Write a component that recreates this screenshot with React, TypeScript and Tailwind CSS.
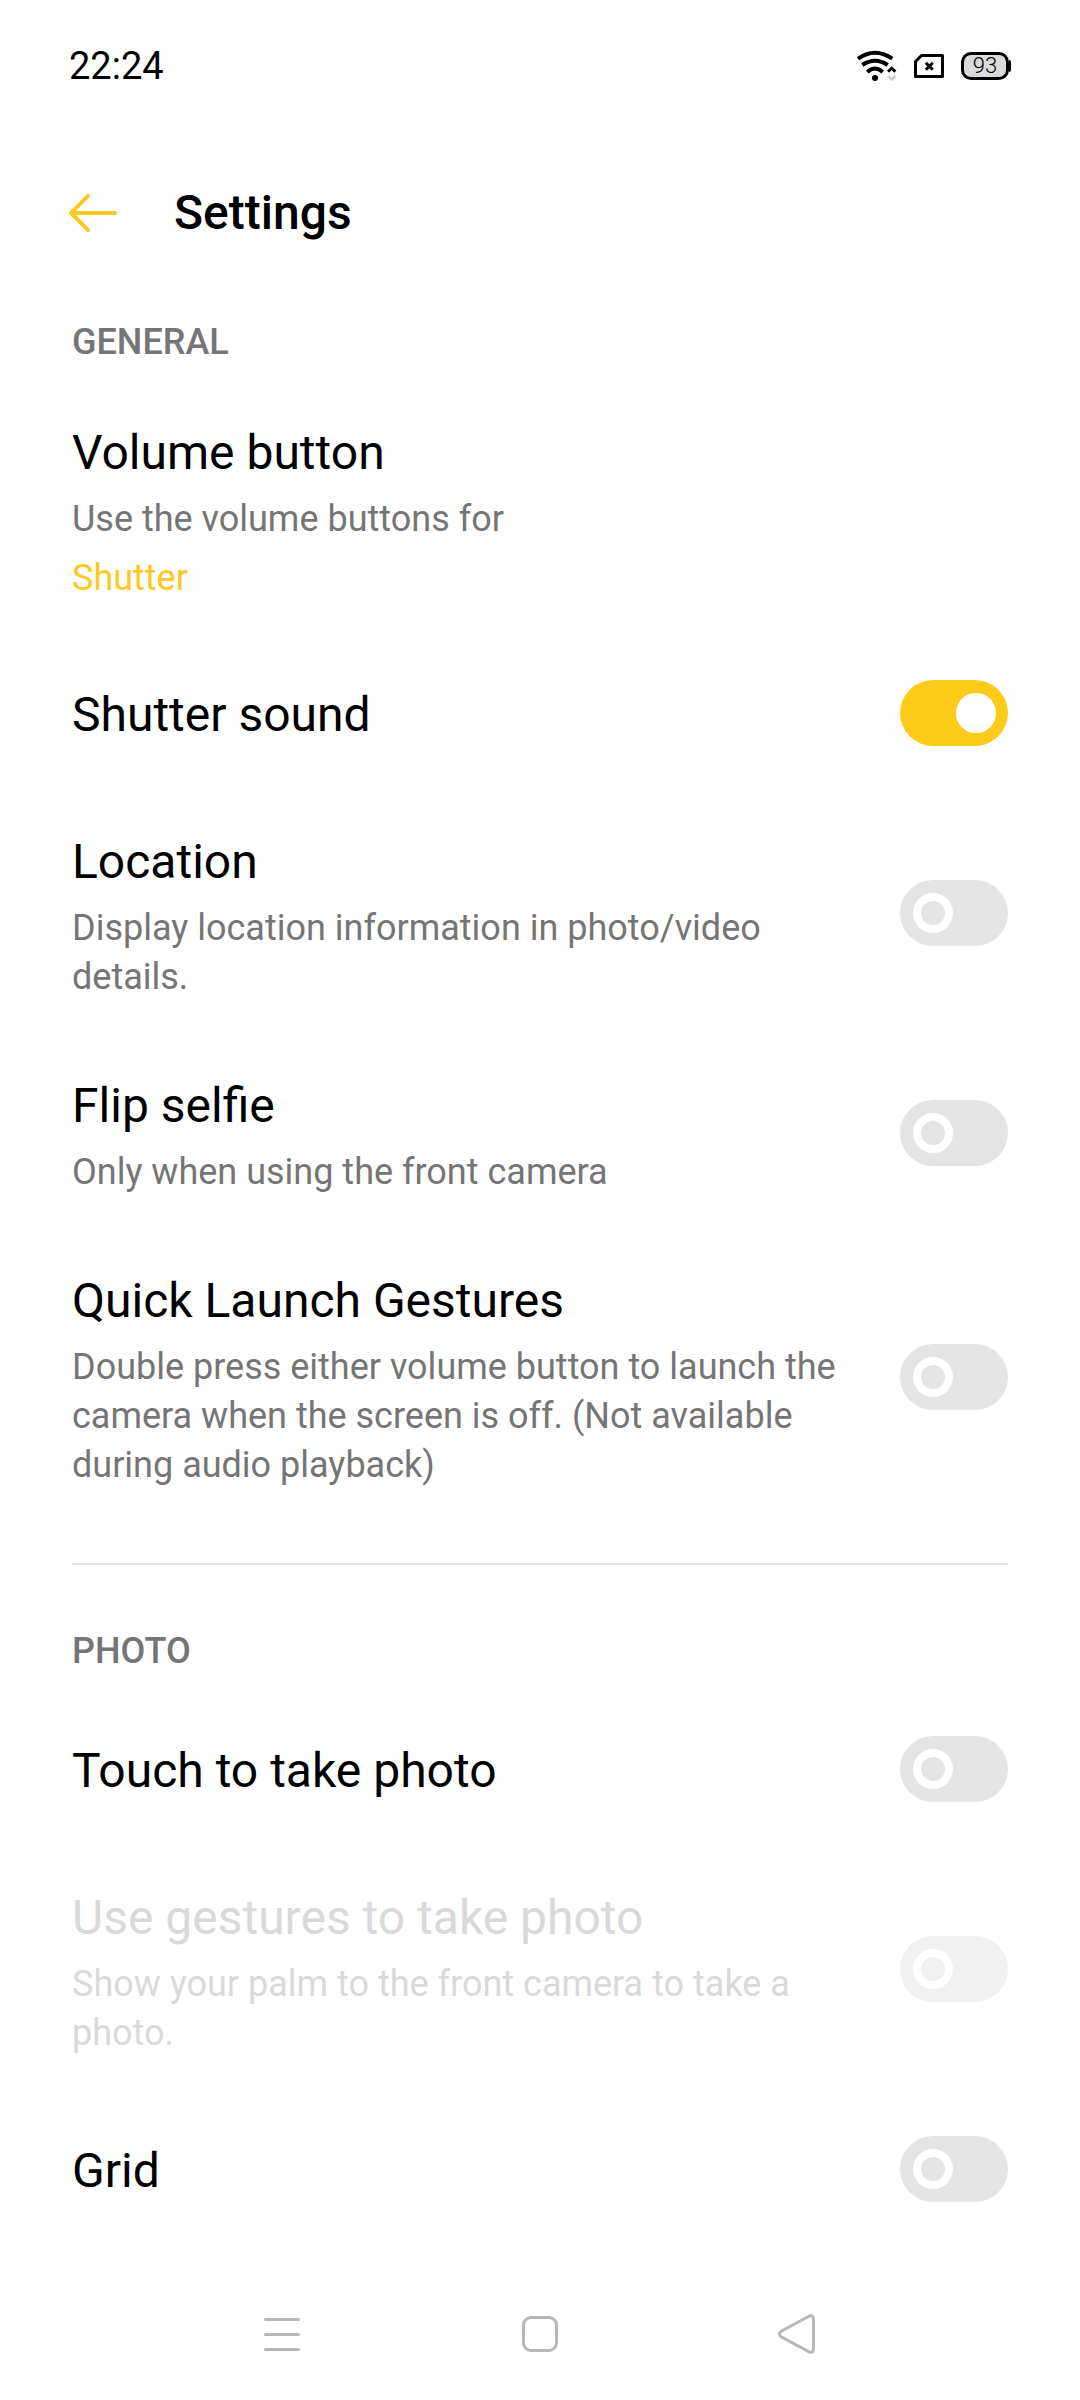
import { useState } from "react";

interface SettingItem {
  id: string;
  title: string;
  description?: string;
  value?: string;
  toggle?: boolean;
  checked?: boolean;
  disabled?: boolean;
}

const general: SettingItem[] = [
  { id: "volume", title: "Volume button", description: "Use the volume buttons for", value: "Shutter" },
  { id: "sound", title: "Shutter sound", toggle: true, checked: true },
  { id: "location", title: "Location", description: "Display location information in photo/video details.", toggle: true },
  { id: "flip", title: "Flip selfie", description: "Only when using the front camera", toggle: true },
  {
    id: "quick",
    title: "Quick Launch Gestures",
    description: "Double press either volume button to launch the camera when the screen is off. (Not available during audio playback)",
    toggle: true,
  },
];

const photo: SettingItem[] = [
  { id: "touch", title: "Touch to take photo", toggle: true },
  {
    id: "gestures",
    title: "Use gestures to take photo",
    description: "Show your palm to the front camera to take a photo.",
    toggle: true,
    disabled: true,
  },
  { id: "grid", title: "Grid", toggle: true },
];

const StatusBar = () => (
  <div className="flex h-[132px] items-center justify-between px-[69px]">
    <span className="text-[38px] leading-[44px]">22:24</span>

    <div className="flex items-center gap-[17px]">
      <svg width="40" height="32" viewBox="0 0 40 32" fill="none" stroke="#000" strokeWidth="4">
        <path d="M1 8.7Q18-3.3 35.3 8.7M5.3 15Q18 6.6 30.7 15M10.3 22Q18 15 25.7 22" />
        <circle cx="18" cy="28" r="3" fill="#000" stroke="none" />
        <path d="M31 21.6l3.7-3.4 3.7 3.4" strokeWidth="2.8" />
        <path d="M31 26l3.7 3.4 3.7-3.4" stroke="#d2d2d2" strokeWidth="2.8" />
      </svg>

      <svg width="30" height="24" viewBox="0 0 30 24" fill="none" stroke="#000" strokeWidth="3" strokeLinejoin="round">
        <path d="M7.5 1.5h21v21h-27v-15z" />
        <path d="M11.8 8.8l7 7M18.8 8.8l-7 7" />
      </svg>

      <div className="flex items-center">
        <div className="flex h-7 w-12 items-center justify-center rounded-[10px] border-3 border-black bg-[#dadada] text-[22px] leading-6 font-light">
          93
        </div>
        <span className="h-3 w-[2px] rounded-r-sm bg-black" />
      </div>
    </div>
  </div>
);

const Toggle = ({ item }: { item: SettingItem }) => {
  const [on, setOn] = useState(!!item.checked);

  return (
    <span className="relative h-[66px] w-[108px] shrink-0">
      <input
        id={item.id}
        type="checkbox"
        role="switch"
        checked={on}
        disabled={item.disabled}
        onChange={() => setOn(!on)}
        className="peer block size-full appearance-none rounded-full bg-[#e4e4e4] checked:bg-[#ffcb1b] disabled:bg-[#f1f1f1]"
      />
      <span className="pointer-events-none absolute top-[13px] left-[13px] size-10 rounded-full border-8 border-white peer-checked:left-[56px] peer-checked:bg-white" />
    </span>
  );
};

const Row = ({ item }: { item: SettingItem }) => {
  const text = (
    <>
      <span className={`block text-[48px] leading-[56px] ${item.disabled ? "text-[#d9d9d9]" : "text-black"}`}>{item.title}</span>
      {item.description && (
        <span className={`mt-[14px] block text-[36px] leading-[49px] ${item.disabled ? "text-[#d9d9d9]" : "text-[#757575]"}`}>
          {item.description}
        </span>
      )}
      {item.value && <span className="mt-[10px] block text-[36px] leading-[49px] text-[#fbca1f]">{item.value}</span>}
    </>
  );

  if (!item.toggle) {
    return <button className="block w-full pt-[43px] pb-8 text-left">{text}</button>;
  }

  return (
    <div className="flex min-h-[156px] items-center justify-between gap-12">
      <label htmlFor={item.id} className={item.description ? "pt-[43px] pb-[33px]" : "pt-1"}>
        {text}
      </label>
      <Toggle item={item} />
    </div>
  );
};

const SectionTitle = ({ children }: { children: string }) => (
  <h2 className="pt-6 pb-[15px] text-[36px] leading-[49px] font-medium text-[#757575]">{children}</h2>
);

const NavBar = () => (
  <nav className="mt-auto flex h-[132px] items-center justify-center gap-[220px]">
    <button aria-label="Recent apps">
      <svg width="36" height="40" viewBox="0 0 36 40" fill="none" stroke="#b7b7b7" strokeWidth="3" strokeLinecap="round">
        <path d="M1.5 5.5h33M1.5 20.5h33M1.5 35.5h33" />
      </svg>
    </button>
    <button aria-label="Home">
      <svg width="38" height="40" viewBox="0 0 38 40" fill="none" stroke="#b7b7b7" strokeWidth="3">
        <rect x="3.5" y="3.5" width="33" height="33" rx="7.5" />
      </svg>
    </button>
    <button aria-label="Back">
      <svg width="38" height="40" viewBox="0 0 38 40" fill="none" stroke="#b7b7b7" strokeWidth="3">
        <path d="M31 2.2L3.2 17.2q-3.4 2.8 0 5.6L31 37.8q4 1.6 4.5-2.8V5q-.5-4.4-4.5-2.8z" />
      </svg>
    </button>
  </nav>
);

const App = () => (
  <div className="flex min-h-screen flex-col bg-white font-['Roboto',sans-serif] text-black">
    <StatusBar />

    <header className="flex h-[162px] items-center gap-14 px-[68px]">
      <button aria-label="Go back">
        <svg width="50" height="40" viewBox="0 0 50 40" fill="none" stroke="#fbca1f" strokeWidth="4" strokeLinecap="round" strokeLinejoin="round">
          <path d="M47 20H3M20 3L3 20l17 17" />
        </svg>
      </button>
      <h1 className="text-[48px] leading-[56px] font-medium">Settings</h1>
    </header>

    <main className="px-[72px]">
      <section>
        <SectionTitle>GENERAL</SectionTitle>
        {general.map((item) => (
          <Row key={item.id} item={item} />
        ))}
      </section>

      <section className="mt-10 border-t-2 border-[#e4e4e4] pt-[38px]">
        <SectionTitle>PHOTO</SectionTitle>
        {photo.map((item) => (
          <Row key={item.id} item={item} />
        ))}
      </section>
    </main>

    <NavBar />
  </div>
);

export default App;
